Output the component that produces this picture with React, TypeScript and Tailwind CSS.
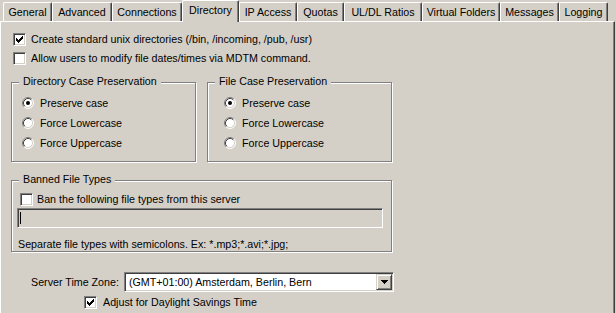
import React from "react";

const Check = () => (
  <svg width="7" height="7" viewBox="0 0 7 7" shapeRendering="crispEdges">
    <rect x="0" y="2" width="1" height="3" fill="#000" />
    <rect x="1" y="3" width="1" height="3" fill="#000" />
    <rect x="2" y="4" width="1" height="3" fill="#000" />
    <rect x="3" y="3" width="1" height="3" fill="#000" />
    <rect x="4" y="2" width="1" height="3" fill="#000" />
    <rect x="5" y="1" width="1" height="3" fill="#000" />
    <rect x="6" y="0" width="1" height="3" fill="#000" />
  </svg>
);

const CheckBox = ({ checked }: { checked?: boolean }) => (
  <div className="w-[13px] h-[13px] shrink-0 border border-t-[#808080] border-l-[#808080] border-r-white border-b-white bg-white shadow-[inset_1px_1px_0_#404040,inset_-1px_-1px_0_#d4d0c8] flex items-center justify-center">
    {checked && <Check />}
  </div>
);

const Radio = ({ checked }: { checked?: boolean }) => (
  <svg width="12" height="12" viewBox="0 0 12 12" className="shrink-0">
    <circle cx="6" cy="6" r="5" fill="#fff" />
    <path d="M 2.11 9.89 A 5.5 5.5 0 0 1 9.89 2.11" stroke="#808080" strokeWidth="1" fill="none" />
    <path d="M 9.89 2.11 A 5.5 5.5 0 0 1 2.11 9.89" stroke="#ffffff" strokeWidth="1" fill="none" />
    <path d="M 2.82 9.18 A 4.5 4.5 0 0 1 9.18 2.82" stroke="#404040" strokeWidth="1" fill="none" />
    <path d="M 9.18 2.82 A 4.5 4.5 0 0 1 2.82 9.18" stroke="#d4d0c8" strokeWidth="1" fill="none" />
    {checked && <circle cx="6" cy="6" r="2" fill="#000" />}
  </svg>
);

const CheckRow = ({ checked, label, gap }: { checked?: boolean; label: string; gap: string }) => (
  <div className={`flex items-center h-[13px] ${gap}`}>
    <CheckBox checked={checked} />
    <span className="whitespace-nowrap">{label}</span>
  </div>
);

const RadioRow = ({ checked, label }: { checked?: boolean; label: string }) => (
  <div className="flex items-center h-[20px] gap-[6px]">
    <Radio checked={checked} />
    <span className="whitespace-nowrap">{label}</span>
  </div>
);

const tabs: { label: string; w: string; active?: boolean }[] = [
  { label: "General", w: "w-[49px]" },
  { label: "Advanced", w: "w-[60px]" },
  { label: "Connections", w: "w-[70px]" },
  { label: "Directory", w: "w-[57px]", active: true },
  { label: "IP Access", w: "w-[58px]" },
  { label: "Quotas", w: "w-[47px]" },
  { label: "UL/DL Ratios", w: "w-[78px]" },
  { label: "Virtual Folders", w: "w-[78px]" },
  { label: "Messages", w: "w-[59px]" },
  { label: "Logging", w: "w-[49px]" },
];

const Tab = ({ label, w, active }: { label: string; w: string; active?: boolean }) =>
  active ? (
    <div
      className={`${w} h-[22px] -mb-px relative z-10 bg-[#d4d0c8] border-l border-t border-white border-r border-r-[#404040] shadow-[inset_-1px_0_0_#808080] flex justify-center pt-[3px] rounded-tl-[2px] rounded-tr-[2px]`}
    >
      <span className="whitespace-nowrap">{label}</span>
    </div>
  ) : (
    <div
      className={`${w} h-[19px] bg-[#d4d0c8] border-l border-t border-white border-r border-r-[#404040] shadow-[inset_-1px_0_0_#808080] flex justify-center pt-[3px] rounded-tl-[2px] rounded-tr-[2px]`}
    >
      <span className="whitespace-nowrap">{label}</span>
    </div>
  );

const GroupLabel = ({ text }: { text: string }) => (
  <span className="absolute left-[7px] -top-[8px] px-[4px] bg-[#d4d0c8] whitespace-nowrap leading-[13px]">
    {text}
  </span>
);

export default function App() {
  return (
    <div className="w-[616px] h-[313px] bg-[#d4d0c8] text-black text-[10.7px] leading-[13px] font-['Liberation_Sans',Arial,sans-serif] overflow-hidden">
      <div className="h-[21px] flex items-end pl-[3px]">
        {tabs.map((t) => (
          <Tab key={t.label} {...t} />
        ))}
      </div>
      <div className="w-[615px] h-[292px] border-t border-l border-white border-r border-r-[#404040] shadow-[inset_-1px_0_0_#808080] flex flex-col">
        <div className="ml-[12px] mt-[11px]">
          <CheckRow checked label="Create standard unix directories (/bin, /incoming, /pub, /usr)" gap="gap-[5px]" />
        </div>
        <div className="ml-[12px] mt-[6px]">
          <CheckRow label="Allow users to modify file dates/times via MDTM command." gap="gap-[5px]" />
        </div>
        <div className="flex ml-[10px] mt-[17px]">
          <div className="relative w-[185px] h-[80px] border border-[#808080] shadow-[1px_1px_0_#fff,inset_1px_1px_0_#fff] pl-[10px] pt-[10px]">
            <GroupLabel text="Directory Case Preservation" />
            <RadioRow checked label="Preserve case" />
            <RadioRow label="Force Lowercase" />
            <RadioRow label="Force Uppercase" />
          </div>
          <div className="relative ml-[11px] w-[185px] h-[80px] border border-[#808080] shadow-[1px_1px_0_#fff,inset_1px_1px_0_#fff] pl-[16px] pt-[10px]">
            <GroupLabel text="File Case Preservation" />
            <RadioRow checked label="Preserve case" />
            <RadioRow label="Force Lowercase" />
            <RadioRow label="Force Uppercase" />
          </div>
        </div>
        <div className="relative ml-[10px] mt-[18px] w-[381px] h-[72px] border border-[#808080] shadow-[1px_1px_0_#fff,inset_1px_1px_0_#fff] flex flex-col">
          <GroupLabel text="Banned File Types" />
          <div className="ml-[8px] mt-[12px]">
            <CheckRow label="Ban the following file types from this server" gap="gap-[4px]" />
          </div>
          <div className="ml-[5px] mt-[2px] w-[366px] h-[20px] border border-t-[#808080] border-l-[#808080] border-r-white border-b-white shadow-[inset_1px_1px_0_#404040,inset_-1px_-1px_0_#d4d0c8] bg-[#d4d0c8] flex items-center pl-[2px]">
            <div className="w-px h-[12px] bg-black" />
          </div>
          <div className="ml-[6px] mt-[10px] whitespace-nowrap">
            Separate file types with semicolons. Ex: *.mp3;*.avi;*.jpg;
          </div>
        </div>
        <div className="flex items-center ml-[30px] mt-[20px]">
          <div className="w-[93px] whitespace-nowrap">Server Time Zone:</div>
          <div className="w-[270px] h-[20px] border border-t-[#808080] border-l-[#808080] border-r-white border-b-white shadow-[inset_1px_1px_0_#404040,inset_-1px_-1px_0_#d4d0c8] bg-white flex items-center p-[1px]">
            <span className="flex-1 pl-[3px] whitespace-nowrap">(GMT+01:00) Amsterdam, Berlin, Bern</span>
            <div className="w-[16px] h-[16px] bg-[#d4d0c8] border border-t-[#d4d0c8] border-l-[#d4d0c8] border-r-[#404040] border-b-[#404040] shadow-[inset_1px_1px_0_#fff,inset_-1px_-1px_0_#808080] flex items-center justify-center">
              <svg width="7" height="4" viewBox="0 0 7 4" shapeRendering="crispEdges">
                <rect x="0" y="0" width="7" height="1" fill="#000" />
                <rect x="1" y="1" width="5" height="1" fill="#000" />
                <rect x="2" y="2" width="3" height="1" fill="#000" />
                <rect x="3" y="3" width="1" height="1" fill="#000" />
              </svg>
            </div>
          </div>
        </div>
        <div className="ml-[83px] mt-[4px]">
          <CheckRow checked label="Adjust for Daylight Savings Time" gap="gap-[6px]" />
        </div>
      </div>
    </div>
  );
}
